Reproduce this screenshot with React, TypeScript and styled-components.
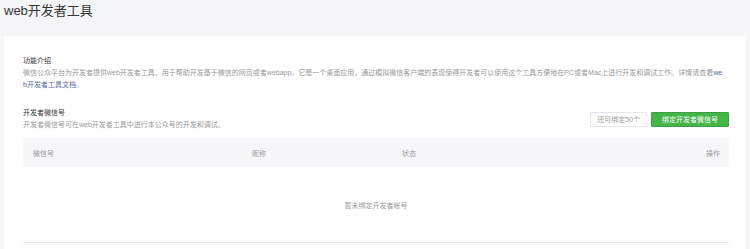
import styled, { createGlobalStyle } from 'styled-components';

const GlobalStyle = createGlobalStyle`
  html, body {
    margin: 0;
    padding: 0;
    background: #f5f6f8;
  }
  body {
    font-family: 'Liberation Sans', 'Noto Sans CJK SC', sans-serif;
    color: #353535;
  }
`;

const Page = styled.div`
  padding: 0 4px;
`;

const PageTitle = styled.h2`
  margin: 0;
  height: 36px;
  padding-top: 3px;
  box-sizing: border-box;
  font-size: 13px;
  line-height: 16px;
  font-weight: 400;
  color: #353535;
`;

const Card = styled.div`
  background: #fff;
  padding: 19px 17px 20px 19px;
  min-height: 240px;
  box-sizing: border-box;
`;

const Section = styled.div`
  & + & {
    margin-top: 16px;
  }
`;

const SectionHead = styled.div`
  display: flex;
  align-items: center;
  justify-content: space-between;
`;

const SectionTitle = styled.h3`
  margin: 0;
  font-size: 7px;
  line-height: 12px;
  font-weight: 400;
  color: #353535;
`;

const Desc = styled.p<{ $wide?: boolean }>`
  margin: 0;
  padding-right: ${(props) => (props.$wide ? '4px' : '0')};
  font-size: 7px;
  line-height: 12px;
  color: #9a9a9a;
  word-break: break-all;
`;

const Link = styled.a`
  color: #576b95;
  text-decoration: none;
`;

const Actions = styled.div`
  display: flex;
  align-items: center;
  gap: 4px;
`;

const Quota = styled.span`
  position: relative;
  height: 15px;
  padding: 0 6px;
  display: inline-flex;
  align-items: center;
  border: 1px solid #e7e7eb;
  box-sizing: border-box;
  font-size: 7px;
  color: #9a9a9a;
  background: #fff;

  &::after {
    content: '';
    position: absolute;
    right: -4px;
    top: 50%;
    width: 6px;
    height: 6px;
    margin-top: -3px;
    background: #fff;
    border-top: 1px solid #e7e7eb;
    border-right: 1px solid #e7e7eb;
    transform: rotate(45deg) scale(0.7, 0.7);
  }
`;

const PrimaryButton = styled.button`
  width: 78px;
  height: 15px;
  padding: 0;
  border: 1px solid #3f9e43;
  border-radius: 1px;
  background: #44b549;
  color: #fff;
  font-family: inherit;
  font-size: 7px;
  line-height: 13px;
  cursor: pointer;
`;

const Table = styled.div`
  margin-top: 7px;
  border-bottom: 1px solid #e7e7eb;
`;

const HeadRow = styled.div`
  display: grid;
  grid-template-columns: 219px 150px 1fr auto;
  align-items: center;
  height: 29px;
  padding: 0 9px 0 10px;
  background: #f6f7f9;
`;

const HeadCell = styled.div<{ $right?: boolean }>`
  font-size: 7px;
  color: #9a9a9a;
  text-align: ${(props) => (props.$right ? 'right' : 'left')};
`;

const Empty = styled.div`
  height: 75px;
  display: flex;
  align-items: center;
  justify-content: center;
  font-size: 7px;
  color: #9a9a9a;
`;

export default function App() {
  return (
    <>
      <GlobalStyle />
      <Page>
        <PageTitle>web开发者工具</PageTitle>
        <Card>
          <Section>
            <SectionTitle>功能介绍</SectionTitle>
            <Desc $wide>
              微信公众平台为开发者提供web开发者工具，用于帮助开发基于微信的网页或者webapp。它是一个桌面应用，通过模拟微信客户端的表现使得开发者可以使用这个工具方便地在PC或者Mac上进行开发和调试工作。详情请查看<Link href="#">web开发者工具文档</Link>。
            </Desc>
          </Section>
          <Section>
            <SectionHead>
              <div>
                <SectionTitle>开发者微信号</SectionTitle>
                <Desc>开发者微信号可在web开发者工具中进行本公众号的开发和调试。</Desc>
              </div>
              <Actions>
                <Quota>还可绑定50个</Quota>
                <PrimaryButton>绑定开发者微信号</PrimaryButton>
              </Actions>
            </SectionHead>
            <Table>
              <HeadRow>
                <HeadCell>微信号</HeadCell>
                <HeadCell>昵称</HeadCell>
                <HeadCell>状态</HeadCell>
                <HeadCell $right>操作</HeadCell>
              </HeadRow>
              <Empty>暂未绑定开发者帐号</Empty>
            </Table>
          </Section>
        </Card>
      </Page>
    </>
  );
}
